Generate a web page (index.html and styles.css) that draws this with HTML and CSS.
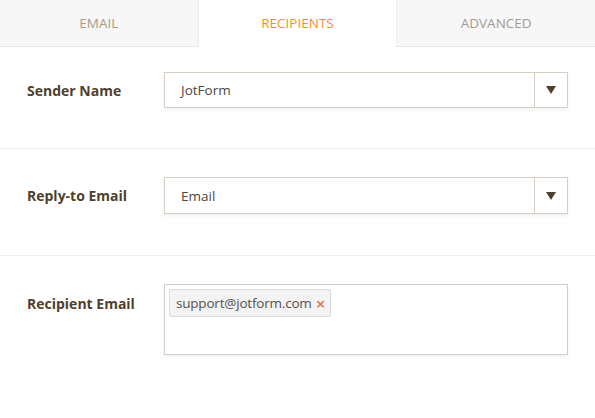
FILE: index.html
```html
<!DOCTYPE html>
<html>
<head>
<meta charset="utf-8">
<link rel="stylesheet" href="styles.css">
</head>
<body>
<div class="tabs">
  <div class="tab tab-email">Email</div>
  <div class="tab tab-active">Recipients</div>
  <div class="tab tab-advanced">Advanced</div>
</div>
<div class="rows">
  <div class="row row-first">
    <div class="label">Sender Name</div>
    <div class="select">
      <div class="select-value">JotForm</div>
      <div class="select-btn"><span class="caret"></span></div>
    </div>
  </div>
  <div class="row row-second">
    <div class="label">Reply-to Email</div>
    <div class="select select-tall">
      <div class="select-value">Email</div>
      <div class="select-btn"><span class="caret"></span></div>
    </div>
  </div>
  <div class="row row-top">
    <div class="label label-top">Recipient Email</div>
    <div class="tagbox">
      <span class="chip">support@jotform.com<span class="chip-x">×</span></span>
    </div>
  </div>
</div>
</body>
</html>
```

FILE: styles.css
```css
html, body {
  margin: 0;
  padding: 0;
  background: #ffffff;
  font-family: "Open Sans", "Noto Sans", sans-serif;
}

.tabs {
  display: flex;
  height: 46px;
  background: #f7f7f7;
  border-bottom: 1px solid #e6e6e6;
}

.tab {
  flex: 1;
  display: flex;
  align-items: center;
  justify-content: center;
  text-transform: uppercase;
  font-size: 13.5px;
  box-sizing: border-box;
  padding-bottom: 1px;
}

.tab-email {
  color: #ad9985;
}

.tab-active {
  background: #ffffff;
  color: #f39218;
  height: 47px;
  border-left: 1px solid #ededed;
  border-right: 1px solid #ededed;
}

.tab-advanced {
  color: #a39a91;
}

.row {
  display: flex;
  align-items: center;
  padding: 28px 0 40px 27px;
  border-bottom: 1px solid #efefef;
}

.row-first {
  padding-top: 25px;
}

.row-second {
  padding-bottom: 41px;
}

.row-top {
  align-items: flex-start;
  border-bottom: none;
}

.label {
  width: 137px;
  font-size: 14px;
  font-weight: 700;
  color: #4f3f2e;
}

.label-top {
  margin-top: 10px;
}

.select {
  display: flex;
  width: 404px;
  height: 36px;
  box-sizing: border-box;
  border: 1px solid #d6cdc3;
  box-shadow: 0 2px 4px rgba(0, 0, 0, 0.06);
  background: #fff;
}

.select-tall {
  height: 37px;
}

.select-value {
  flex: 1;
  display: flex;
  align-items: center;
  padding-left: 16px;
  font-size: 13.5px;
  color: #4c4640;
}

.select-btn {
  width: 32px;
  border-left: 1px solid #d6cdc3;
  display: flex;
  align-items: center;
  justify-content: center;
}

.caret {
  width: 0;
  height: 0;
  border-left: 5.5px solid transparent;
  border-right: 5.5px solid transparent;
  border-top: 8px solid #4d4030;
}

.tagbox {
  width: 404px;
  height: 71px;
  box-sizing: border-box;
  border: 1px solid #d6cdc3;
  box-shadow: 0 2px 4px rgba(0, 0, 0, 0.06);
  padding: 4px 4px;
}

.chip {
  display: inline-flex;
  align-items: center;
  height: 28px;
  box-sizing: border-box;
  padding: 0 5px 0 6px;
  background: #f3f3f3;
  border: 1px solid #dcdcdc;
  border-radius: 2px;
  font-size: 13.5px;
  color: #55504a;
  letter-spacing: -0.2px;
}

.chip-x {
  margin-left: 4px;
  color: #e0735a;
  font-size: 17px;
  line-height: 1;
  font-weight: 600;
}
```
